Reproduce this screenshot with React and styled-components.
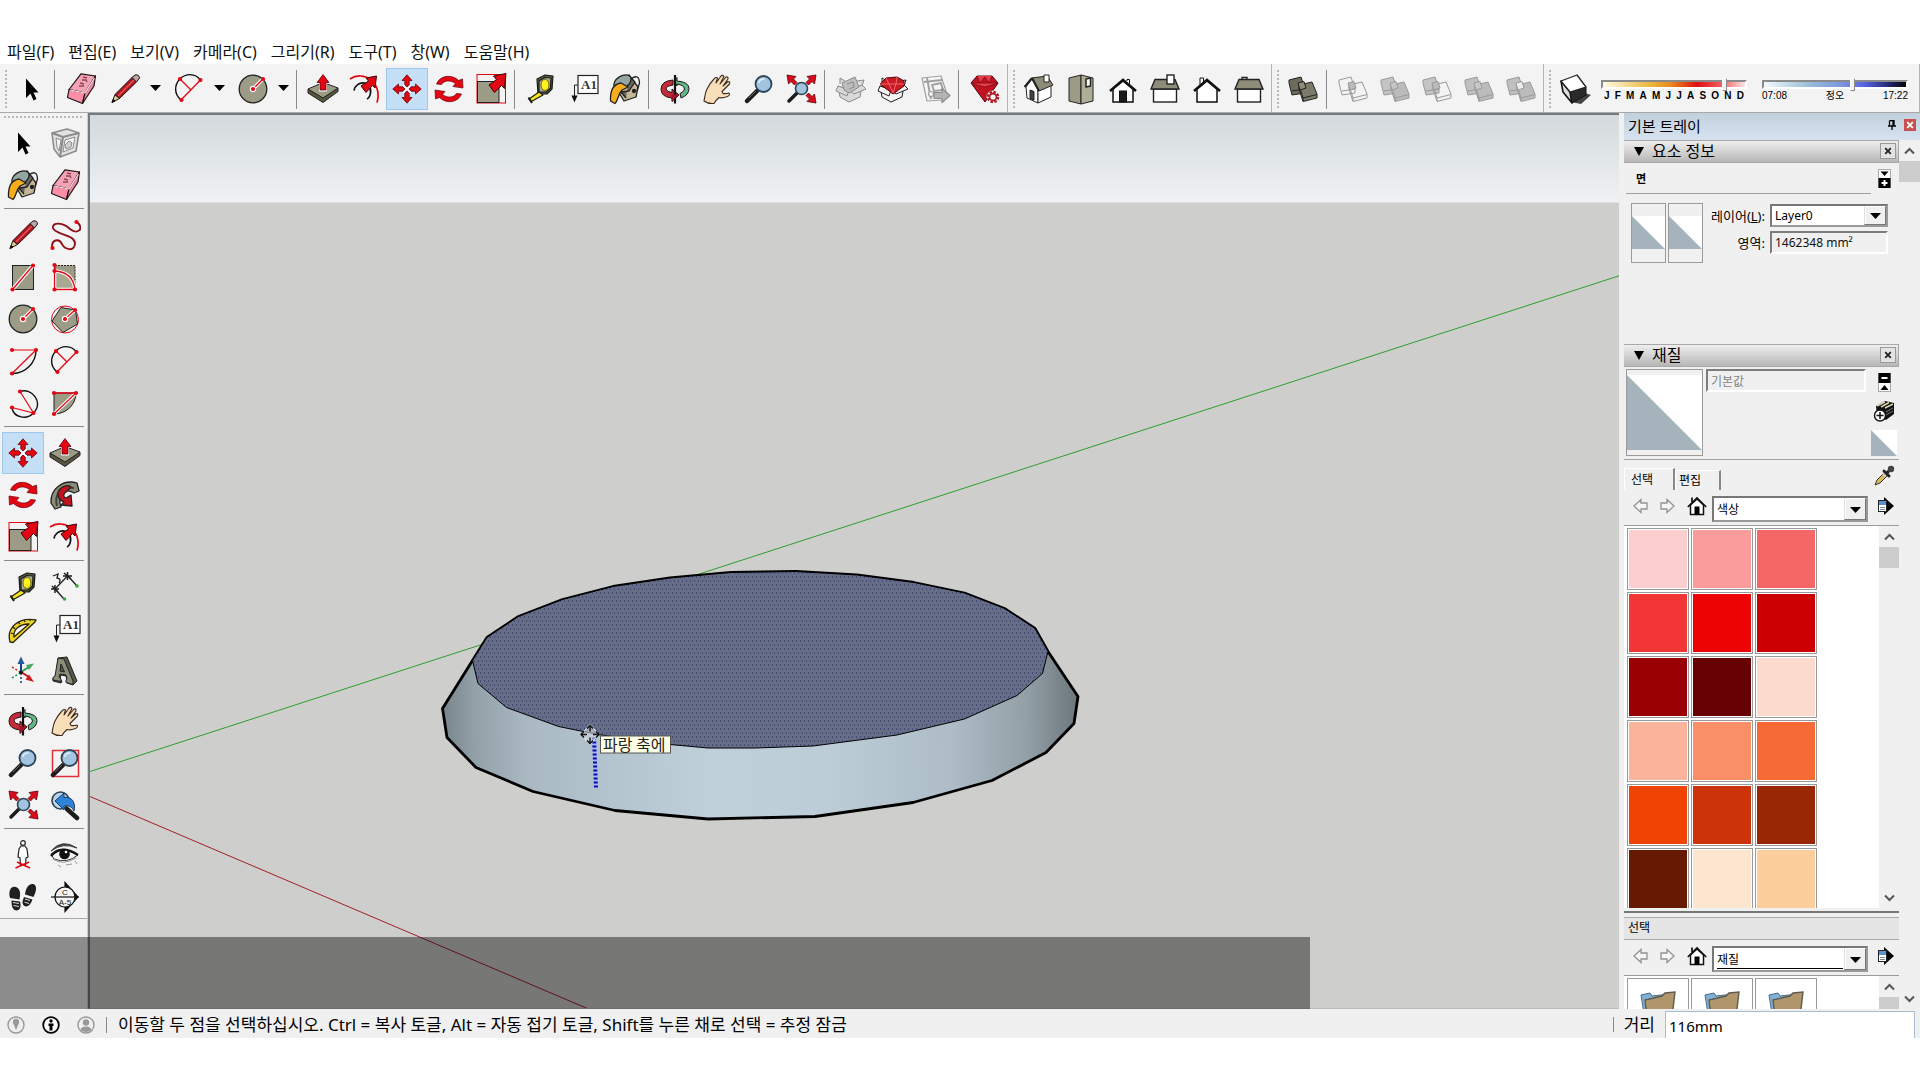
import styled, { createGlobalStyle } from 'styled-components';

const GlobalStyle = createGlobalStyle`
  * {
    box-sizing: border-box;
  }
  body {
    margin: 0;
    background: #fff;
    color: #000;
    font-family: 'Noto Sans', 'Noto Sans CJK KR', sans-serif;
    font-size: 12px;
  }
  button, input, select {
    font: inherit;
    color: inherit;
    border-radius: 0;
  }
`;

const RED = '#e30613';
const STONE = '#9c9b86';

/* ---------- icons, all drawn on a 32 x 32 grid ---------- */

const Dots = ({ at }) => at.map(([x, y]) => <circle key={`${x}-${y}`} cx={x} cy={y} r="2.1" fill={RED} />);

const BigArrow = () => (
  <path d="M31 .5 L18.5 3 L21.5 6.5 L14 12 L19.5 19.5 L26.5 12.5 L29.5 15.5Z" fill={RED} stroke="#3a0508" strokeWidth="1" />
);

const pencil = (
  <g stroke="#1c1010" strokeLinejoin="round">
    <path d="M3 29.5 L6 21.5 L10.5 25.5Z" fill="#d8cf8e" />
    <path d="M3 29.5 L4 26.5 L6 28Z" fill="#111" />
    <path d="M6 21.5 L23 4.5 L27.5 9 L10.5 25.5Z" fill="#b3151c" />
    <path d="M9 23 L25 7" stroke="#e8565a" strokeWidth="1.5" />
    <path d="M23 4.5 L26 2 Q30 1 30.5 5 L27.5 9Z" fill="#b9a9a4" />
  </g>
);

const eraser = (
  <g stroke="#241318" strokeWidth="1.2" strokeLinejoin="round">
    <path d="M16 .8 L30.5 3 L20 20 L4 16.5Z" fill="#f5a3b4" />
    <path d="M4 16.5 L20 20 L17.5 30.5 L2.5 24.5Z" fill="#fb8fa6" />
    <path d="M20 20 L30.5 3 L29 13 L17.5 30.5Z" fill="#e88aa0" />
    <path d="M5 17 L20 20 L29.5 5" stroke="#ffe6ec" fill="none" />
    <path d="M18 4 l4 1 M17 7 l4 0 l1 2 M15 10 l4 1 M14 13 l5 0" strokeWidth="1.5" fill="none" stroke="#8a4a5b" />
  </g>
);

const bucket = (
  <g stroke="#222" strokeWidth="1.3" strokeLinejoin="round">
    <path d="M11 6 L20 2 L29 14 L27 24 L15 28 L9 18Z" fill="#c3b797" />
    <path d="M20 3 L26 9 L20 18 L12 19 L17 25" fill="#6a675f" />
    <ellipse cx="13.5" cy="9" rx="9.5" ry="6" transform="rotate(-32 13.5 9)" fill="#93a6a4" />
    <path d="M22 6 Q30 0 30.5 10 L28 18" fill="none" />
    <path d="M12 10 C5 11 1 17 1.5 28 L6 30.5 C9 28 9 21 13 17 L19 14Z" fill="#f8ad1d" />
    <circle cx="25" cy="18" r="1.5" fill="#222" />
  </g>
);

const arc = (
  <g fill="none">
    <path d="M8 27 C1 21 1 12 7 6 C13 0 22 0 27.5 7" stroke="#111" strokeWidth="1.4" />
    <path d="M7 6 L18 17 M8 27 L27.5 7" stroke={RED} strokeWidth="1.3" />
    <Dots at={[[7, 6], [27.5, 7], [8.5, 27]]} />
  </g>
);

const circle = (
  <g>
    <circle cx="16" cy="16" r="13.8" fill={STONE} stroke="#222" strokeWidth="1.3" />
    <path d="M16 16 L26 6" stroke="#fff" strokeWidth="3.5" />
    <path d="M16 16 L26 6" stroke={RED} strokeWidth="1.3" />
    <circle cx="16" cy="16" r="3.2" fill="#fff" />
    <Dots at={[[16, 16], [26, 6]]} />
  </g>
);

const pushPull = (
  <g strokeLinejoin="round">
    <path d="M1 16 L16 24.5 L31 15 V18.5 L16 29.5 L1 20Z" fill="#54543f" stroke="#222" />
    <path d="M1 16 L16 9.5 L31 15 L16 25Z" fill={STONE} stroke="#222" />
    <path d="M16 1.5 L22 9.5 H19 V17.5 H13 V9.5 H10Z" fill={RED} stroke="#fff" strokeWidth="2" />
    <path d="M16 1.5 L22 9.5 H19 V17 H13 V9.5 H10Z" fill={RED} stroke="#5d0009" strokeWidth=".8" />
  </g>
);

const offset = (
  <g fill="none">
    <path d="M1 6 C14 -3 34 9 28 29.5" stroke={RED} strokeWidth="1.7" />
    <path d="M5 17.5 C7 7 23 7 21.5 20 C21 24 20 25 18 26" stroke="#111" strokeWidth="1.7" />
    <path d="M27.5 3 L17 5 L19.5 8 L12 13 L17 19.5 L23.5 12.5 L26 15Z" fill={RED} stroke="#3a0508" />
  </g>
);

const move = (
  <g fill={RED} stroke="#6b0309" strokeWidth=".8">
    {[0, 90, 180, 270].map((a) => (
      <path key={a} transform={`rotate(${a} 16 16)`} d="M16 1.8 L21 7.5 H18.2 V12 L16 14 L13.8 12 V7.5 H11Z" />
    ))}
    <path d="M12 12 L20 20 M20 12 L12 20" stroke="#fff" strokeWidth="1.5" />
  </g>
);

const rotate = (
  <g fill={RED} stroke="#6b0309" strokeWidth=".7">
    {[0, 180].map((a) => (
      <path key={a} transform={`rotate(${a} 16 16)`} d="M3.5 11 C7 2 19 1 25.5 7.5 L29.5 6 L30 15 L20 13.5 L22.5 10.5 C17 6.5 11 7.5 8.5 11.5Z" />
    ))}
  </g>
);

const scale = (
  <g>
    <rect x="2" y="1.5" width="28.5" height="28.5" fill="none" stroke={RED} />
    <rect x="2.5" y="8.5" width="21.5" height="21" fill={STONE} stroke="#222" />
    <BigArrow />
  </g>
);

const tape = (
  <g stroke="#1c1c12" strokeWidth="1.2" strokeLinejoin="round">
    <path d="M12 6 L20 2 L28 3 L27 16 L22 21 L13 21Z" fill="#55564c" />
    <path d="M14 8 L20 4.5 L26 5 L25.5 15 L21 19 L14 19Z" fill="#a8a89c" />
    <ellipse cx="20" cy="12" rx="4" ry="5.5" fill="#fff21a" stroke="#77751a" />
    <path d="M14 19 L4 26 L6.5 28.5 L18 22Z" fill="#f6e51e" />
    <path d="M3.5 24.5 L7 30" strokeWidth="2" />
  </g>
);

const textLabel = (
  <g>
    <rect x="11" y="2.5" width="20" height="18" fill="#fff" stroke="#222" strokeWidth="1.2" />
    <text x="14" y="16" fontFamily="Liberation Serif" fontSize="13" fontWeight="700" fill="#333">A1</text>
    <path d="M11 12 H7.5 V23" fill="none" stroke="#222" />
    <path d="M4.5 22.5 H10.5 L7.5 29.5Z" fill="#111" />
  </g>
);

const orbit = (
  <g stroke="#241414" strokeLinejoin="round">
    <path d="M14 7 L14 12 Q7 13 7 16 Q8 19 13 19.5 L13 16 L20 22 L13 28.5 V25 Q2 24 2 16 Q2 8 14 7Z" fill="#c22b3a" />
    <path d="M18 8 V4.5 L15 8 L18 13 V11 Q25 12 25.5 16 Q25 19 21 20.5 L22 25 Q30 22 30 15.5 Q30 9 18 8Z" fill="#5fb887" />
    <path d="M16 2 V30.5" stroke="#111" strokeWidth="2.2" />
    <path d="M12 21 L20 22 L13 28Z" fill="#a3142a" stroke="none" />
  </g>
);

const hand = (
  <path
    d="M3 28 C4 23 4 20 6 16 C8 12 10 9 13 6 Q15 3.5 16.5 5 L15 10 L20 3 Q22 1.5 23 3.5 L19 11 L25 4 Q27.5 3.5 27 6 L22 13 L27 8.5 Q29.5 8.5 28.5 11 L21 18.5 L22 20.5 Q25 21 28 20 Q29.5 22 26.5 23.5 Q21 25.5 18 24.5 Q14 28 13 30.5 Q7 31 3 28Z"
    fill="#f8dfba"
    stroke="#3d2a1c"
    strokeWidth="1.1"
    strokeLinejoin="round"
  />
);

const lens = (
  <g>
    <path d="M4 28 L14 18" stroke="#1c1c1c" strokeWidth="4.5" strokeLinecap="round" />
    <path d="M6 25 L13 18" stroke="#666" strokeWidth="1" />
    <circle cx="20.5" cy="11" r="8" fill="#a3c4e0" stroke="#2d4457" strokeWidth="1.8" />
    <path d="M15.5 10 Q17 5.5 21.5 6" stroke="#e4f0fa" strokeWidth="1.5" fill="none" />
  </g>
);

const corner = 'M0 0 L9 1.5 L6.5 4 L10 7.5 L7.5 10 L4 6.5 L1.5 9Z';

const extents = (
  <g>
    <path d="M4 28 L12 20" stroke="#1c1c1c" strokeWidth="3.5" strokeLinecap="round" />
    <circle cx="16.5" cy="15.5" r="6" fill="#a3c4e0" stroke="#2d4457" strokeWidth="1.6" />
    <g fill="#d80c1c" stroke="#5d0009" strokeWidth=".8">
      <path d={corner} transform="translate(2 2)" />
      <path d={corner} transform="translate(31 2) scale(-1 1)" />
      <path d={corner} transform="translate(31 30) scale(-1 -1)" />
    </g>
  </g>
);

const openBox = (gem) => (
  <g stroke={gem ? '#222' : '#8b8b8b'} strokeLinejoin="round" fill={gem ? '#f4f4f4' : '#d9d9d9'}>
    <path d="M3 13 L14 17 L27 12 L25 24 L14 29 L5 24Z" />
    <path d="M3 13 L1 18 L12 23 L14 17Z M27 12 L31 16 L19 21 L14 17Z M5 11 L5 5 L10 8 M22 8 L29 7 L27 13" />
    {gem ? (
      <g fill="#c81925" stroke="#5d0009">
        <path d="M3 11 L9 5 L20 4 L27 8 L27 13 L16 21Z" />
        <path d="M3 11 L27 11 M9 5 L12 11 L16 20 L19 11 L20 4" stroke="#f0666e" fill="none" />
      </g>
    ) : (
      <path d="M7 10 L20 4 L24 14 L14 20 L9 17Z M12 11 L18 9 L19 14 L14 16" fill="#bdbdbd" />
    )}
  </g>
);

const layoutPage = (
  <g stroke="#a0a0a0" fill="#f6f6f6" strokeWidth="1.2" strokeLinejoin="round">
    <path d="M3 5 L22 3 L27 18 L24 27 L8 28Z" />
    <path d="M5 9 L23 7 M8 5 L12 26 M13 12 L22 10 L24 17 L15 18Z" strokeWidth="2" />
    <circle cx="12" cy="21" r="2.5" />
    <path d="M15 19.5 H23 V15.5 L31 22.5 L23 29.5 V25.5 H15Z" fill="#b4b4b4" stroke="#8c8c8c" />
  </g>
);

const gem = (
  <g strokeLinejoin="round">
    <path d="M2 10 L8 3 H23 L29 10 L16 29Z" fill="#c0121f" stroke="#5d0009" />
    <path d="M2 10 H29 L23 12 L16 14 L8 12Z M8 3 L11 10 L16 4 L20 10 L23 3" fill="#e43d47" stroke="#7b0a14" strokeWidth=".8" />
    <circle cx="24" cy="24" r="4.5" fill="#f3f3f3" stroke="#f3f3f3" strokeWidth="4" />
    <circle cx="24" cy="24" r="5" fill="none" stroke="#b31b27" strokeWidth="2.5" strokeDasharray="2.4 1.5" />
    <circle cx="24" cy="24" r="3.5" fill="#f3f3f3" stroke="#b31b27" strokeWidth="1.8" />
  </g>
);

const houseIso = (
  <g stroke="#222" strokeLinejoin="round">
    <path d="M3 14 L9 6 L15 17 V30 L4 25Z" fill="#fff" />
    <path d="M15 17 L28 12 V24 L15 30Z" fill="#fff" />
    <path d="M9 5 L24 3 L30 12 L16 18Z" fill="#8d8c79" />
    <path d="M9 5 L1.5 14 M9 5 L16 18" strokeWidth="2" />
    <path d="M21 2 H26 V9 H21Z" fill="#fff" />
    <path d="M7 17 L11 18.5 V27 L7 25.5Z" fill="#444" />
  </g>
);

const houseTop = (
  <g stroke="#222" strokeLinejoin="round">
    <path d="M4 5 L16 2 V31 L4 28Z" fill="#9c9b86" />
    <path d="M16 2 L28 5 V28 L16 31Z" fill="#aead98" />
    <path d="M21 6 L25.5 5 V13 L21 14Z" fill="#fff" strokeWidth="1.5" />
  </g>
);

const houseFront = (
  <g stroke="#111" strokeLinejoin="miter">
    <path d="M6 16 V29 H26 V16 L16 8Z" fill="#fff" strokeWidth="1.5" />
    <path d="M3 18 L16 7 L29 18" fill="none" strokeWidth="2.6" />
    <path d="M20 8 V6.5 H22.5 V11" fill="#fff" />
    <rect x="12.5" y="18" width="7" height="11" fill="#1c1c1c" />
  </g>
);

const houseRight = (
  <g stroke="#222" strokeWidth="1.4">
    <rect x="4.5" y="16" width="23" height="13" fill="#fff" />
    <path d="M6 6.5 H26 L30 16 H2Z" fill="#8d8c79" />
    <rect x="18" y="2" width="7" height="9" fill="#fff" />
  </g>
);

const houseBack = (
  <g stroke="#111">
    <path d="M6 16 V29 H26 V16 L16 8Z" fill="#fff" strokeWidth="1.5" />
    <path d="M9 12 V5 H12.5 V10" fill="#fff" />
    <path d="M3 18 L16 7 L29 18" fill="none" strokeWidth="2.6" />
  </g>
);

const houseLeft = (
  <g stroke="#222" strokeWidth="1.4">
    <rect x="4.5" y="16" width="23" height="13" fill="#fff" />
    <path d="M9 6.5 V4.5 H14 V6.5" fill="#fff" />
    <path d="M6 6.5 H26 L30 16 H2Z" fill="#8d8c79" />
  </g>
);

const solid = (stroke, back, front, inner) => (
  <g stroke={stroke} strokeLinejoin="round">
    <path d="M2 7 L14 4 L18 16 V20 L5 22 L2 10Z" fill={back} />
    <path d="M5 18 L18 16" />
    <path d="M12 12 L25 9 L30 21 V25 L16 28.5 L12 16Z" fill={front} />
    <path d="M16 25 L30 21.5 M12 12 L16 25 V28" fill="none" />
    <path d="M11 10 L17 8.5 L19 15 L13 17Z" fill={inner} />
  </g>
);

const shadowCube = (
  <g strokeLinejoin="round">
    <path d="M12 29 L22 31 L32 22 L26 20Z" fill="#444" />
    <path d="M2 8 L11 19 L13 30 L4 19Z" fill="#ddd" stroke="#111" strokeWidth="1.6" />
    <path d="M11 19 L27 14 L27 22 L13 30Z" fill="#2a2a2a" stroke="#111" />
    <path d="M2 8 L18 2 L27 14 L11 19Z" fill="#fff" stroke="#222" strokeWidth="1.3" />
  </g>
);

const component = (
  <g stroke="#8b8b8b" fill="#e2e2e2" strokeLinejoin="round">
    <path d="M3 6 L18 2 L30 6 L27 24 L11 30 L5 22Z" strokeWidth="1.6" />
    <path d="M3 6 L14 10 L30 6 M14 10 L11 30" fill="none" strokeWidth="2" />
    <path d="M7 11 L12 13 L10 24 L8 20Z M16 13 L26 10 L24 21 L14 25Z" fill="#f5f5f5" />
    <path d="M16 18 L20 14 L23 16 L22 20 L17 22Z" fill="#cfcfcf" />
  </g>
);

const freehand = (
  <g fill="none">
    <path d="M28 3 C36 10 28 16 21 10 C14 3 3 3 4 9 C6 16 25 15 26 24 C26 34 15 30 13 25 C10 19 2 20 3 30" stroke="#8d1019" strokeWidth="1.9" />
    <Dots at={[[27.5, 3], [3.5, 29]]} />
  </g>
);

const rectangle = (
  <g>
    <rect x="5.5" y="4.5" width="21" height="24" fill={STONE} stroke="#222" />
    <path d="M5.5 28.5 L26 4.5" stroke="#fff" strokeWidth="3.5" />
    <path d="M5.5 28.5 L26 4.5" stroke={RED} strokeWidth="1.3" />
    <Dots at={[[5.5, 28.5], [26, 4.5]]} />
  </g>
);

const rotatedRect = (
  <g>
    <rect x="6" y="4.5" width="20" height="24" fill={STONE} stroke="#222" strokeDasharray="2 1" />
    <path d="M5.5 10 Q24 11 26 28.5 H5.5Z" fill="#a9a894" stroke="#fff" strokeWidth="3.5" />
    <path d="M5.5 4 V28.5 H26 Q24 11 5.5 10" fill="none" stroke={RED} strokeWidth="1.3" />
    <Dots at={[[5.5, 4], [5.5, 10], [5.5, 28.5], [26, 28.5]]} />
  </g>
);

const polygon = (
  <g>
    <circle cx="16" cy="16.5" r="13.5" fill="none" stroke={RED} />
    <path d="M3 18 L12 4.5 L26.5 7 L28.5 21 L14 29.5Z" fill={STONE} stroke="#222" />
    <path d="M16 16 L26 7" stroke="#fff" strokeWidth="3.5" />
    <path d="M16 16 L26 7" stroke={RED} strokeWidth="1.3" />
    <circle cx="16" cy="16" r="3.2" fill="#fff" />
    <Dots at={[[16, 16], [26, 7]]} />
  </g>
);

const arcCenter = (
  <g fill="none">
    <path d="M5 28.5 C18 29 29 18 29 5" stroke="#111" strokeWidth="1.4" />
    <path d="M5 5 H29 L5 28.5" stroke={RED} strokeWidth="1.2" />
    <Dots at={[[5, 5], [29, 5], [5, 28.5]]} />
  </g>
);

const arcThree = (
  <g fill="none">
    <path d="M13 4.5 C25 0 37 16 26.5 26 C20 33 7 31 5 21" stroke="#111" strokeWidth="1.4" />
    <path d="M13 4.5 L26.5 26 L5 20.5" stroke={RED} strokeWidth="1.2" />
    <Dots at={[[13, 4.5], [26.5, 26], [5, 20.5]]} />
  </g>
);

const pie = (
  <g fill="none">
    <path d="M5 27 V6 H27 C27 17 18 27 5 27Z" fill={STONE} stroke="#222" />
    <path d="M5 27 L27 6" stroke="#fff" strokeWidth="3.5" />
    <path d="M5 27 L27 6 H5" stroke={RED} strokeWidth="1.3" />
    <Dots at={[[5, 6], [27, 6], [5, 27]]} />
  </g>
);

const followMe = (
  <g stroke="#222" strokeWidth="1.3" strokeLinejoin="round">
    <path d="M2 24 C1 10 14 0 28 4 L30 12 L25 14 C15 8 8 16 12 28 L6 30Z" fill="#8d8c79" />
    <path d="M8 27 C5 15 12 7 25 9" fill="none" stroke="#44433a" strokeWidth="2" />
    <path d="M10 11 C14 6 20 6 22 8 L17 13 C14 15 14 18 17 19 L22 16 L23 27 L12 26 L15 23 C8 20 8 14 10 11Z" fill="#c3131f" />
  </g>
);

const dimension = (
  <g fill="none" stroke="#222" strokeWidth="1.3">
    <path d="M6 18 L19 4.5 M7 19 L15 28 M19 5 L28 15" />
    <path d="M2 18 H10 M6 14 V22 M3 15 L9 21 M14 5 H23 M18.5 1 V9 M15 2 L22 8" strokeWidth="1.5" />
    <path d="M4 5 L9 3 L8 7 Q13 8 10 12" />
    <circle cx="15.5" cy="28" r="1.8" fill="#3ba63b" stroke="none" />
    <circle cx="28" cy="15" r="1.8" fill="#3ba63b" stroke="none" />
  </g>
);

const protractor = (
  <g stroke="#2b2608" strokeWidth="1.3" strokeLinejoin="round">
    <path d="M3 29 C-1 14 12 4 29 7 L28 9 L6 29.5Z" fill="#ecd32c" />
    <path d="M7 24 C6 16 13 11 22 11Z" fill="#f3f3f3" />
    <path d="M4 20 l3 1 M6 14 l2 2 M11 9 l2 2 M17 7 l1 2 M23 6 l0 2" />
  </g>
);

const axes = (
  <g fill="none" strokeWidth="1.5">
    <path d="M14 18 V29" stroke="#1a3f7d" strokeDasharray="2 2" />
    <path d="M5 12 L13 17" stroke="#c22" strokeDasharray="2 2" />
    <path d="M5 23 L13 18" stroke="#2a9c4a" strokeDasharray="2 2" />
    <path d="M14 17 V8" stroke="#1a3f7d" strokeWidth="2" />
    <path d="M14 1.5 L17.5 9 H10.5Z" fill="#2456a3" />
    <path d="M14 17 L22 12" stroke="#2a9c4a" strokeWidth="2" />
    <path d="M27 8.5 L22 15 L19 10Z" fill="#45a85c" />
    <path d="M14 17 L22 22" stroke="#b3151c" strokeWidth="2" />
    <path d="M27 27 L18.5 24.5 L22 19.5Z" fill="#d01825" />
    <circle cx="14" cy="17.5" r="1.8" fill="#111" />
  </g>
);

const text3d = (
  <g stroke="#222" strokeLinejoin="round">
    <path d="M9 3 L18 2 L28 26 L24 30 L18 28 V25 L17 21 L12 20 L11 24 L13 26 L12 28 L4 26 L4 23 L7 21Z" fill="#55564c" />
    <path d="M9 3 L15 4 L24 26 L24 29.5 L17 27.5 V25 L18 24 L17 20 L11 19 L10 22 L12 24 V26.5 L4 25 V22.5 L6 21Z M12 9 L11 16 L15.5 17Z" fill="#8d8c79" />
  </g>
);

const zoomWindow = (
  <g>
    <rect x="3.5" y="3.5" width="26" height="26" fill="none" stroke="#e0303a" strokeWidth="1.5" />
    <g>{lens}</g>
  </g>
);

const zoomPrevious = (
  <g>
    <circle cx="11.5" cy="11.5" r="8.5" fill="#bcd4e8" stroke="#2d4457" strokeWidth="1.6" />
    <path d="M18 20 L28 29" stroke="#1c1c1c" strokeWidth="4.5" strokeLinecap="round" />
    <path d="M6 12 L15 4 V8.5 C23 7 27 14 25 22 C23 18 20 16 15 17 V21Z" fill="#2e82d8" stroke="#173c66" />
  </g>
);

const camera = (
  <g fill="none" stroke="#222" strokeWidth="1.2">
    <circle cx="16" cy="4" r="2.3" fill="#fff" />
    <path d="M14 7 L12 10 L11 18 L13 19 L13.5 26 H18.5 L19 19 L21 18 L20 10 L18 7Z" fill="#fff" />
    <path d="M8.5 29 L22 23 M10 23 L23 29" stroke={RED} strokeWidth="1.4" />
  </g>
);

const eye = (
  <g>
    <path d="M2 15 Q12 5 29 16 Q18 25 5 20Z" fill="#f2f2f2" stroke="#333" strokeWidth="1" />
    <path d="M2 12 Q13 -1 28 9 Q14 3 2 12Z" fill="#3a3a3a" stroke="#3a3a3a" />
    <path d="M2 17 Q12 5 29 16" fill="none" stroke="#111" strokeWidth="2.2" />
    <circle cx="15.5" cy="15" r="5.3" fill="#111" />
    <circle cx="17" cy="13" r="1.3" fill="#fff" />
    <path d="M4 20 Q14 27 27 19 M9 26 l3 2 M17 26 l6 -1 M26 22 l2 3" fill="none" stroke="#999" />
  </g>
);

const footprints = (
  <g fill="#1f1f1f">
    <path d="M3 17 C1 10 4 5 8.500 6 C13 7 14 12 12.5 18.5Z M4.500 19.5 L13 20.5 C14.500 26 13 29.5 9.500 29.5 C5.500 29 4.500 25 4.500 19.5Z" />
    <path d="M18 13.5 C19 6 22 2.500 26 3 C30 4 30 9 26.5 16Z M17 16 L25.500 18.5 C23.500 24 20.500 26.500 17.500 25 C14.500 23 15.500 20 17 16Z" />
    <path d="M6 21.5 L12 22.5 M6.500 24.5 L12 25.5 M18 18 L23 19.5 M17.500 21 L22 22.500" stroke="#ddd" />
  </g>
);

const section = (
  <g stroke="#111" strokeWidth="1.2">
    <path d="M16 1.5 L29 16 L16 30.5Z" fill="#111" />
    <circle cx="16" cy="16" r="10" fill="#f6f6f6" />
    <path d="M2 16 H30" />
    <g stroke="none" fill="#111" fontFamily="Liberation Sans" fontSize="8" textAnchor="middle">
      <text x="16" y="14">C</text>
      <text x="16" y="23.5">A-5</text>
    </g>
  </g>
);

const select = <path d="M11 5.5 V25 L15.5 20.5 L18.5 27.5 L21.5 26 L18.5 19.5 H23.5Z" fill="#000" />;

const ICONS = {
  select, eraser, pencil, arc, circle, pushPull, offset, move, rotate, scale, tape, textLabel, bucket,
  orbit, hand, lens, extents, layoutPage, gem, houseIso, houseTop, houseFront, houseRight, houseBack,
  houseLeft, shadowCube, component, freehand, rectangle, rotatedRect, polygon, arcCenter, arcThree, pie,
  followMe, dimension, protractor, axes, text3d, zoomWindow, zoomPrevious, camera, eye, footprints, section,
  boxEmpty: openBox(false),
  boxGem: openBox(true),
  outerShell: solid('#222', '#6d6c5c', '#7c7b69', '#8d8c79'),
  intersect: solid('#9a9a9a', 'none', 'none', '#bbb'),
  union: solid('#9a9a9a', '#c4c4c4', '#bbb', '#c4c4c4'),
  subtract: solid('#9a9a9a', '#c4c4c4', 'none', '#bbb'),
  trim: solid('#9a9a9a', '#c0c0c0', '#bbb', '#c9c9c9'),
  split: solid('#9a9a9a', '#c0c0c0', '#bbb', '#eee'),
};

const Icon = ({ name }) => (
  <svg width="32" height="32" viewBox="0 0 32 32" aria-hidden="true">{ICONS[name]}</svg>
);

/* ---------- frame and menu ---------- */

const AppFrame = styled.div`
  display: flex;
  flex-direction: column;
  height: 100vh;
  padding: 40px 0 42px;
  overflow: hidden;
`;

const MenuBar = styled.nav`
  display: flex;
  flex: none;
  align-items: center;
  gap: 14px;
  height: 24px;
  padding: 0 7px;
  font-size: 16px;
  line-height: 24px;
`;

const MenuLink = styled.a`
  color: #111;
  text-decoration: none;
  white-space: nowrap;
`;

/* ---------- toolbars ---------- */

const TopBar = styled.div`
  display: flex;
  flex: none;
  height: 49px;
  background: #f3f3f3;
  border-bottom: 1px solid #a9a9a9;
`;

const ToolGroup = styled.div`
  display: flex;
  align-items: center;
  padding: 2px 1px 0 4px;
  border-right: 1px solid #b5b5b5;
  &:last-child {
    flex: 1;
  }
`;

const Grip = styled.div`
  width: ${(p) => (p.$flat ? 'auto' : '3px')};
  height: ${(p) => (p.$flat ? '3px' : '41px')};
  margin: ${(p) => (p.$flat ? '0 3px 4px 3px' : '0 3px 0 0')};
  background: radial-gradient(circle, #b9b9b9 1px, transparent 1px) 0 0 / 4px 4px;
`;

const ToolButton = styled.button`
  display: flex;
  align-items: center;
  justify-content: center;
  width: 42px;
  height: 42px;
  padding: 0;
  background: ${(p) => (p.$active ? '#c4dff6' : 'none')};
  border: 1px solid ${(p) => (p.$active ? '#9cc8ee' : 'transparent')};
`;

const Split = styled.div`
  display: flex;
  align-items: center;
  width: 64px;
  padding-left: 2px;
`;

const CaretButton = styled.button`
  width: 18px;
  height: 42px;
  padding: 0 0 6px;
  background: none;
  border: 0;
`;

const Divider = styled.div`
  width: 8px;
  height: 39px;
  padding-left: 2px;
  &::before {
    content: '';
    display: block;
    width: 1px;
    height: 100%;
    background: #8a8a8a;
  }
`;

const SideDivider = styled.div`
  grid-column: 1 / -1;
  height: 8px;
  padding: 2px 2px 0;
  &::before {
    content: '';
    display: block;
    height: 1px;
    background: #8a8a8a;
  }
`;

const Workspace = styled.div`
  display: flex;
  flex: 1;
  min-height: 0;
  background: #f2f2f2;
`;

const SideBar = styled.div`
  flex: none;
  width: 88px;
  border-right: 1px solid #ccc;
`;

const SideTools = styled.div`
  padding-top: 2px;
  background: #f3f3f3;
  border-bottom: 1px solid #a9a9a9;
`;

const SideGrid = styled.div`
  display: grid;
  grid-template-columns: 42px 42px;
  padding: 0 2px;
`;

const Caret = ({ size = 11, tall }) => (
  <svg width={size} height={tall ? 9 : 6} viewBox="0 0 12 6" preserveAspectRatio="none" aria-hidden="true">
    <path d="M0 0 H12 L6 6Z" fill="#000" />
  </svg>
);

/* ---------- shadow sliders ---------- */

const SliderBox = styled.label`
  display: flex;
  flex-direction: column;
  width: 146px;
  margin-left: ${(p) => (p.$first ? '5px' : '15px')};
`;

const SliderTrack = styled.input`
  appearance: none;
  width: 100%;
  height: 13px;
  margin: 0;
  background: none;
  &::-webkit-slider-runnable-track {
    height: 9px;
    background: ${(p) => p.$ramp};
    border: 2px solid;
    border-color: #8a8a8a #fff #fff #8a8a8a;
  }
  &::-webkit-slider-thumb {
    appearance: none;
    width: 5px;
    height: 13px;
    margin-top: -4px;
    background: #f3f3f3;
    border: 1px solid;
    border-color: #fff #8a8a8a #8a8a8a #fff;
  }
`;

const SliderScale = styled.span`
  display: flex;
  justify-content: space-between;
  padding: 0 ${(p) => (p.$inset ? '3px' : '0')};
  font-family: 'Liberation Sans', 'Noto Sans CJK KR', sans-serif;
  font-size: 10px;
  font-weight: ${(p) => (p.$inset ? 700 : 400)};
  line-height: 10px;
`;

/* ---------- drawing area ---------- */

const Viewport = styled.main`
  position: relative;
  flex: 1;
  min-width: 0;
  border-top: 2px solid #74797c;
  border-left: 2px solid #74797c;
  border-bottom: 1px solid #bbb;
`;

const SceneSvg = styled.svg`
  display: block;
  width: 100%;
  height: 100%;
`;

const CaptionShade = styled.div`
  position: absolute;
  left: 0;
  bottom: 71px;
  width: 1310px;
  max-width: 70%;
  height: 72px;
  background: rgba(0, 0, 0, 0.42);
`;

const BODY = '442.5,708 447,737 476,767 533,791 615,810 708,818.5 815,816 913,802 992,780 1046,752 1074,723 1078,696 1048,651 1035,628 1004.5,608 964.5,592.5 914,582 857,574.5 796,571 731,572 670,577.5 613,586 562.5,599 518.5,616 487,637 472.5,660';
const TOP_FACE = '472.5,660 478,683 506.5,707 558.5,726 598,734 670,744 708,747.5 756,747.5 813,745.5 897,734.5 964.5,718.5 1017,695 1042.5,673 1048,651 1035,628 1004.5,608 964.5,592.5 914,582 857,574.5 796,571 731,572 670,577.5 613,586 562.5,599 518.5,616 487,637';

const Scene = () => (
  <SceneSvg viewBox="90 114 1529 894" preserveAspectRatio="xMidYMid slice" role="img" aria-label="모델">
    <defs>
      <linearGradient id="sky" x1="0" y1="0" x2="0" y2="1">
        <stop offset="0" stopColor="#d3d9dc" />
        <stop offset="1" stopColor="#eff2f4" />
      </linearGradient>
      <linearGradient id="side" gradientUnits="userSpaceOnUse" x1="442" y1="690" x2="1078" y2="680">
        <stop offset="0" stopColor="#78848a" />
        <stop offset=".05" stopColor="#92a0a8" />
        <stop offset=".13" stopColor="#a9b8c1" />
        <stop offset=".25" stopColor="#b3c3cd" />
        <stop offset=".42" stopColor="#bfd0da" />
        <stop offset=".6" stopColor="#bdcdd8" />
        <stop offset=".8" stopColor="#adbcc6" />
        <stop offset=".92" stopColor="#929fa6" />
        <stop offset="1" stopColor="#6c767b" />
      </linearGradient>
      <pattern id="stipple" width="4" height="8" patternUnits="userSpaceOnUse">
        <rect width="4" height="8" fill="#666d86" />
        <rect width="1" height="1" fill="#22265f" />
        <rect x="2" y="4" width="1" height="1" fill="#22265f" />
      </pattern>
    </defs>
    <rect x="0" y="0" width="1920" height="1080" fill="#cececc" />
    <rect x="0" y="114" width="1920" height="88" fill="url(#sky)" />
    <path d="M90 771 L1620 275" stroke="#2f9e2f" />
    <path d="M90 796 L592 1010" stroke="#a3202a" />
    <polygon points={BODY} fill="url(#side)" stroke="#000" strokeWidth="2.8" strokeLinejoin="round" />
    <polygon points={TOP_FACE} fill="url(#stipple)" stroke="#000" strokeWidth="1" />
    <path d="M594 737 L596 788" stroke="#a9b6ff" strokeWidth="4" />
    <path d="M594 737 L596 788" stroke="#0a0aa8" strokeWidth="4" strokeDasharray="2 2" />
    <g stroke="#111" strokeWidth="1.4" fill="none">
      <path d="M590 724 L599 734 L590 744 L581 734Z" fill="#cfd6da" fillOpacity=".6" stroke="#eee" strokeWidth="1" />
      <path d="M590 725 V731 M590 737 V743 M581 734 H587 M593 734 H599" />
      <path d="M587 728 L590 725 L593 728 M587 740 L590 743 L593 740 M584 731 L581 734 L584 737 M596 731 L599 734 L596 737" />
    </g>
    <rect x="600.5" y="735.5" width="70" height="17" fill="#ffffe6" stroke="#555" />
    <text x="603" y="750" fontFamily="'Noto Sans CJK KR', sans-serif" fontSize="16" fill="#222">파랑 축에</text>
  </SceneSvg>
);

/* ---------- tray ---------- */

const Tray = styled.aside`
  display: flex;
  flex: none;
  flex-direction: column;
  width: 301px;
  padding-left: 5px;
  background: #f0f0f0;
`;

const TrayTitle = styled.div`
  display: flex;
  flex: none;
  align-items: center;
  gap: 8px;
  height: 27px;
  padding: 0 4px 3px;
  background: linear-gradient(#c2d0de, #d6e2ef);
  font-size: 15px;
`;

const TrayName = styled.span`
  flex: 1;
`;

const PlainButton = styled.button`
  display: flex;
  align-items: center;
  justify-content: center;
  padding: 0;
  background: none;
  border: 0;
`;

const TrayClose = styled(PlainButton)`
  width: 12px;
  height: 12px;
  background: #c75050;
`;

const TrayBody = styled.div`
  display: flex;
  flex: 1;
  min-height: 0;
`;

const TrayColumn = styled.div`
  display: flex;
  flex: 1;
  flex-direction: column;
  min-width: 0;
`;

const PanelHead = styled.div`
  display: flex;
  flex: none;
  align-items: center;
  height: 23px;
  padding: 0 2px 1px 10px;
  gap: 8px;
  background: linear-gradient(#eee, #b7b7b7);
  border: solid #a8a8a8;
  border-width: 1px 1px 1px 0;
`;

const PanelName = styled.h2`
  flex: 1;
  margin: 0;
  font-size: 16px;
  font-weight: 400;
  line-height: 20px;
`;

const PanelClose = styled(PlainButton)`
  width: 16px;
  height: 16px;
  background: #e3e3e3;
  border: 1px solid #999;
`;

const EntityPanel = styled.div`
  flex: none;
  height: 181px;
  padding: 5px 8px 0 2px;
`;

const EntityTitle = styled.div`
  display: flex;
  align-items: center;
  justify-content: space-between;
  height: 20px;
  padding-left: 10px;
  font-size: 11px;
  font-weight: 700;
`;

const Rule = styled.hr`
  flex: none;
  height: 1px;
  margin: ${(p) => (p.$inset ? '5px 20px 9px 0' : '0')};
  background: #a0a0a0;
  border: 0;
`;

const EntityRow = styled.div`
  display: flex;
  gap: 2px;
  padding-left: 5px;
`;

const Thumb = styled.div`
  width: ${(p) => p.$w}px;
  height: ${(p) => p.$h}px;
  padding-top: ${(p) => p.$top}px;
  border: 1px solid #9a9a9a;
  svg {
    display: block;
  }
`;

const FieldGrid = styled.div`
  display: grid;
  flex: 1;
  grid-template-columns: 1fr 118px;
  grid-auto-rows: 23px;
  gap: 4px 5px;
  align-items: center;
  justify-items: end;
  padding: 1px 3px 0 0;
  white-space: nowrap;
`;

const FieldLabel = styled.label`
  font-size: 13px;
`;

const SelectBox = styled.div`
  position: relative;
  flex: ${(p) => (p.$grow ? 1 : 'none')};
  width: 100%;
  height: ${(p) => (p.$grow ? 26 : 23)}px;
  margin: ${(p) => (p.$grow ? '6px 5px 0 0' : '0')};
  svg {
    position: absolute;
    right: 7px;
    top: ${(p) => (p.$grow ? 11 : 9)}px;
    pointer-events: none;
  }
  &::before {
    content: '';
    display: ${(p) => (p.$marked ? 'block' : 'none')};
    position: absolute;
    left: 5px;
    right: 25px;
    bottom: 3px;
    height: 1px;
    background: #000;
  }
  &::after {
    content: '';
    position: absolute;
    right: 2px;
    top: 2px;
    bottom: 2px;
    width: 20px;
    border: 1px solid;
    border-color: #fff #777 #777 #ddd;
    pointer-events: none;
  }
`;

const SelectField = styled.select`
  appearance: none;
  width: 100%;
  height: 100%;
  padding: 0 24px 0 3px;
  background: linear-gradient(#f0f0f0, #f0f0f0) right / 20px 100% no-repeat #fff;
  border: 2px solid;
  border-color: #777 #999 #999 #777;
`;

const TextField = styled.input`
  width: ${(p) => p.$w};
  height: 23px;
  padding: 0 3px;
  background: #f0f0f0;
  border: 2px solid;
  border-color: #7d7d7d #fff #fff #7d7d7d;
  color: ${(p) => (p.disabled ? '#838383' : '#111')};
`;

const MaterialTop = styled.div`
  display: flex;
  flex: none;
  gap: 3px;
  height: 92px;
  padding: 2px 2px 0;
`;

const MaterialActions = styled.div`
  display: flex;
  flex-direction: column;
  align-items: center;
  gap: 8px;
  margin-left: auto;
  padding-top: 4px;
`;

const TabRow = styled.div`
  display: flex;
  flex: none;
  align-items: flex-end;
  height: 30px;
`;

const Tab = styled.button`
  width: ${(p) => (p.$active ? 51 : 46)}px;
  height: ${(p) => (p.$active ? 22 : 20)}px;
  padding: 0 12px 0 ${(p) => (p.$active ? 6 : 3)}px;
  background: #f0f0f0;
  border: solid;
  border-width: 1px 2px 0 1px;
  border-color: #fff #888 #fff #fff;
  line-height: 16px;
  text-align: left;
  white-space: nowrap;
`;

const Picker = styled(PlainButton)`
  align-self: flex-start;
  margin: 5px 4px 0 auto;
`;

const NavRow = styled.div`
  display: flex;
  flex: none;
  align-items: center;
  height: 35px;
  padding: 0 5px 3px 9px;
  gap: 5px;
`;

const HistoryButtons = styled.div`
  display: flex;
  align-items: center;
  gap: 12px;
`;

const ListArea = styled.div`
  display: flex;
  flex: ${(p) => (p.$fixed ? 'none' : 1)};
  height: ${(p) => (p.$fixed ? '34px' : 'auto')};
  min-height: 0;
  background: #fff;
  border-top: 1px solid #9a9a9a;
  overflow: hidden;
`;

const TileGrid = styled.div`
  display: grid;
  flex: 1;
  grid-template-columns: repeat(3, 62px);
  grid-auto-rows: 62px;
  gap: 2px;
  align-content: start;
  padding: 2px 3px 0;
`;

const Swatch = styled.button`
  padding: 1px;
  background: ${(p) => p.$color} content-box;
  border: 1px solid #999;
`;

const FolderTile = styled.button`
  display: flex;
  justify-content: center;
  padding: 11px 0 0;
  background: #fff;
  border: 1px solid #999;
`;

const ScrollBar = styled.div`
  display: flex;
  flex: none;
  flex-direction: column;
  align-items: center;
  width: ${(p) => p.$w}px;
  background: #f0f0f0;
`;

const ScrollButton = styled(PlainButton)`
  flex: none;
  width: 100%;
  height: 21px;
`;

const ScrollThumb = styled.div`
  flex: none;
  width: 100%;
  height: 21px;
  margin-bottom: auto;
  background: #cdcdcd;
`;

const SecondaryHead = styled.div`
  flex: none;
  height: 29px;
  margin-top: 3px;
  padding-top: 4px;
  border-top: 2px solid #777;
`;

const SecondaryName = styled.h3`
  height: 23px;
  margin: 0;
  padding-left: 4px;
  background: #e5e5e5;
  border: solid #aaa;
  border-width: 1px 0;
  font-size: 12px;
  font-weight: 400;
  line-height: 20px;
`;

const Chevron = ({ down }) => (
  <svg width="11" height="8" viewBox="0 0 11 8" aria-hidden="true">
    <path d={down ? 'M1 1.5 L5.5 6 L10 1.5' : 'M1 6.5 L5.5 2 L10 6.5'} fill="none" stroke="#555" strokeWidth="2" />
  </svg>
);

const Cross = ({ color }) => (
  <svg width="8" height="8" viewBox="0 0 8 8" aria-hidden="true">
    <path d="M1.2 1.2 L6.8 6.8 M6.8 1.2 L1.2 6.8" stroke={color} strokeWidth="1.8" />
  </svg>
);

const Wedge = ({ w, h }) => (
  <svg width={w} height={h} viewBox="0 0 10 10" preserveAspectRatio="none" aria-hidden="true">
    <rect width="10" height="10" fill="#fff" />
    <path d="M0 0 L10 10 H0Z" fill="#a5b3bc" />
  </svg>
);

const ExpandIcon = ({ minus }) => (
  <svg width="13" height="19" viewBox="0 0 13 19" aria-hidden="true">
    <rect x=".5" y=".5" width="12" height="18" fill="#fff" stroke="#aaa" />
    <rect x=".5" y={minus ? 0 : 9} width="12" height="10" fill="#000" />
    <path d={minus ? 'M3.5 5 H9.5' : 'M3.5 14 H9.5 M6.5 11 V17'} stroke="#fff" strokeWidth="2" />
    <path d={minus ? 'M6.5 12 L10.5 17 H2.5Z' : 'M2.5 2.5 H10.5 L6.5 7Z'} fill="#000" />
  </svg>
);

const CreateIcon = () => (
  <svg width="22" height="22" viewBox="0 0 22 22" aria-hidden="true">
    <path d="M3 6 L12 1 L21 3 V14 L13 20 L4 16Z" fill="#111" />
    <path d="M4 6 L12 2 M8 7 L16 2.5 M12 8 L20 4" stroke="#d8d4b0" strokeWidth="1.5" />
    <path d="M13 12 L20 8 M13 15 L20 11" stroke="#777" />
    <circle cx="7" cy="15.5" r="5.5" fill="#fff" stroke="#111" strokeWidth="1.4" />
    <path d="M3.5 15.5 H10.5 M7 12 V19" stroke="#111" strokeWidth="1.5" />
  </svg>
);

const Dropper = () => (
  <svg width="21" height="21" viewBox="0 0 21 21" aria-hidden="true">
    <path d="M1 20 L3 15 L11 7 L14 10 L6 18Z" fill="#d9b95c" stroke="#333" />
    <path d="M8 9 L11 7 L14 10 L11 12Z" fill="#ccc" />
    <path d="M10 6 L15 11 M13 8 L17 3.5" stroke="#222" strokeWidth="3" strokeLinecap="round" />
    <circle cx="17" cy="4" r="3.2" fill="#444" />
  </svg>
);

const HistoryArrow = ({ flip }) => (
  <svg width="15" height="16" viewBox="0 0 15 16" aria-hidden="true">
    <path transform={flip ? 'translate(15 0) scale(-1 1)' : undefined} d="M1 8 L8 1.5 V5 H14 V11 H8 V14.5Z" fill="#f6f6f6" stroke="#929292" strokeWidth="1.3" />
  </svg>
);

const HomeIcon = () => (
  <svg width="20" height="20" viewBox="0 0 20 20" aria-hidden="true">
    <path d="M3.5 9 V18.5 H16.5 V9 L10 3Z" fill="#fff" stroke="#111" strokeWidth="1.5" />
    <path d="M.8 11 L10 2 L19.2 11 M5 6 V1.5" fill="none" stroke="#111" strokeWidth="1.7" />
    <rect x="7.5" y="10.5" width="5" height="8" fill="#000" />
  </svg>
);

const DetailsIcon = () => (
  <svg width="16" height="18" viewBox="0 0 16 18" aria-hidden="true">
    <path d="M6 0 L16 9 L6 18Z" fill="#000" />
    <rect x=".5" y="3.5" width="8" height="11" fill="#fff" stroke="#222" />
    <rect x="1" y="4" width="7" height="4" fill="#5c8fd0" />
    <path d="M2 10.5 H7 M2 12.5 H7" stroke="#789" />
  </svg>
);

const FolderIcon = () => (
  <svg width="36" height="40" viewBox="0 0 36 40" aria-hidden="true">
    <path d="M1 5 L10 3 L12 6 L30 4 L28 36 H6Z" fill="#7fb2d6" stroke="#4a6a80" />
    <path d="M5 10 L22 6 L25 3 L35 2 L31 36 H8Z" fill="#b1966b" stroke="#5e5a52" strokeWidth="1.4" />
  </svg>
);

/* ---------- status bar ---------- */

const StatusBar = styled.footer`
  display: flex;
  flex: none;
  align-items: center;
  height: 29px;
  padding: 2px 5px 0 7px;
  background: #f0f0f0;
  font-size: 17px;
  line-height: 24px;
`;

const StatusIcons = styled.div`
  display: flex;
  align-items: center;
  gap: 17px;
  height: 16px;
  padding-right: 11px;
  margin-right: 11px;
  border-right: 1px solid #888;
`;

const StatusText = styled.span`
  flex: 1;
  white-space: nowrap;
`;

const Measure = styled.label`
  display: flex;
  align-items: center;
  gap: 10px;
  padding-left: 10px;
`;

const MeasureTick = styled.span`
  width: 1px;
  height: 15px;
  background: #888;
`;

const MeasureInput = styled.input`
  width: 250px;
  height: 27px;
  padding: 2px 3px 0;
  background: #fff;
  border: 1px solid #a9bccf;
  border-bottom: 0;
  font-size: 15px;
`;

const MENU = ['파일(F)', '편집(E)', '보기(V)', '카메라(C)', '그리기(R)', '도구(T)', '창(W)', '도움말(H)'];

const TOP_TOOLS = [
  ['select', '|', 'eraser', 'pencil+', 'arc+', 'circle+', '|', 'pushPull', 'offset', 'move', 'rotate', 'scale', '|',
    'tape', 'textLabel', 'bucket', '|', 'orbit', 'hand', 'lens', 'extents', '|', 'boxEmpty', 'boxGem', 'layoutPage', '|', 'gem'],
  ['houseIso', 'houseTop', 'houseFront', 'houseRight', 'houseBack', 'houseLeft'],
  ['outerShell', '|', 'intersect', 'union', 'subtract', 'trim', 'split'],
];

const SIDE_TOOLS = [
  'select', 'component', 'bucket', 'eraser', '|',
  'pencil', 'freehand', 'rectangle', 'rotatedRect', 'circle', 'polygon', 'arcCenter', 'arc', 'arcThree', 'pie', '|',
  'move', 'pushPull', 'rotate', 'followMe', 'scale', 'offset', '|',
  'tape', 'dimension', 'protractor', 'textLabel', 'axes', 'text3d', '|',
  'orbit', 'hand', 'lens', 'zoomWindow', 'extents', 'zoomPrevious', '|',
  'camera', 'eye', 'footprints', 'section',
];

const COLORS = [
  '#fbcfcf', '#fa9c9c', '#f56666', '#f23535', '#ed0303', '#cc0003',
  '#990003', '#660003', '#fcdacd', '#f9b49b', '#f98f67', '#f56a35',
  '#f04405', '#cd3308', '#992706', '#661a04', '#fde6cf', '#fbce9b',
];

const MONTHS = 'JFMAMJJASOND'.split('');

const Tool = ({ name }) => (
  <ToolButton type="button" aria-label={name} $active={name === 'move'}><Icon name={name} /></ToolButton>
);

const MaterialNav = ({ value, marked }) => (
  <NavRow>
    <HistoryButtons>
      <PlainButton type="button" aria-label="뒤로"><HistoryArrow /></PlainButton>
      <PlainButton type="button" aria-label="앞으로"><HistoryArrow flip /></PlainButton>
      <PlainButton type="button" aria-label="홈"><HomeIcon /></PlainButton>
    </HistoryButtons>
    <SelectBox $grow $marked={marked}>
      <SelectField aria-label="라이브러리" defaultValue={value}>
        <option>{value}</option>
      </SelectField>
      <Caret size={11} />
    </SelectBox>
    <PlainButton type="button" aria-label="세부 정보"><DetailsIcon /></PlainButton>
  </NavRow>
);

function App() {
  return (
    <>
      <GlobalStyle />
      <AppFrame>
        <MenuBar>
          {MENU.map((m) => <MenuLink key={m} href="#">{m}</MenuLink>)}
        </MenuBar>

        <TopBar>
          {TOP_TOOLS.map((group, g) => (
            <ToolGroup key={g}>
              <Grip />
              {group.map((t, i) => {
                if (t === '|') return <Divider key={i} />;
                if (t.endsWith('+')) {
                  return (
                    <Split key={i}>
                      <Tool name={t.slice(0, -1)} />
                      <CaretButton type="button" aria-label="더 보기"><Caret /></CaretButton>
                    </Split>
                  );
                }
                return <Tool key={i} name={t} />;
              })}
            </ToolGroup>
          ))}
          <ToolGroup>
            <Grip />
            <Tool name="shadowCube" />
            <SliderBox $first>
              <SliderTrack type="range" aria-label="날짜" defaultValue="87" $ramp="linear-gradient(90deg, #fffbe8, #eab93a 33%, #e8881e 48%, #e01010 66%, #f06060 84%, #ffe4e4)" />
              <SliderScale $inset>{MONTHS.map((m, i) => <span key={i}>{m}</span>)}</SliderScale>
            </SliderBox>
            <SliderBox>
              <SliderTrack type="range" aria-label="시간" defaultValue="63" $ramp="linear-gradient(90deg, #f4fbff, #9cc0d8 30%, #7d94e0 55%, #5560dc 72%, #22266e 88%, #05050c)" />
              <SliderScale><span>07:08</span><span>정오</span><span>17:22</span></SliderScale>
            </SliderBox>
          </ToolGroup>
        </TopBar>

        <Workspace>
          <SideBar>
            <SideTools>
              <Grip $flat />
              <SideGrid>
                {SIDE_TOOLS.map((t, i) => (t === '|' ? <SideDivider key={i} /> : <Tool key={i} name={t} />))}
              </SideGrid>
            </SideTools>
          </SideBar>

          <Viewport>
            <Scene />
          </Viewport>

          <Tray>
            <TrayTitle>
              <TrayName>기본 트레이</TrayName>
              <PlainButton type="button" aria-label="고정">
                <svg width="8" height="10" viewBox="0 0 8 10"><path d="M1.5 .7 H6 V6 M1.5 .7 V6 M5 1 V6 M0 6 H8 M4 6 V10" fill="none" stroke="#000" strokeWidth="1.3" /></svg>
              </PlainButton>
              <TrayClose type="button" aria-label="닫기"><Cross color="#fff" /></TrayClose>
            </TrayTitle>
            <TrayBody>
              <TrayColumn>
                <PanelHead>
                  <Caret size={10} tall />
                  <PanelName>요소 정보</PanelName>
                  <PanelClose type="button" aria-label="닫기"><Cross color="#222" /></PanelClose>
                </PanelHead>
                <EntityPanel>
                  <EntityTitle>
                    면
                    <PlainButton type="button" aria-label="펼치기"><ExpandIcon /></PlainButton>
                  </EntityTitle>
                  <Rule $inset />
                  <EntityRow>
                    <Thumb $w={35} $h={60} $top={12}><Wedge w={33} h={33} /></Thumb>
                    <Thumb $w={35} $h={60} $top={12}><Wedge w={33} h={33} /></Thumb>
                    <FieldGrid>
                      <FieldLabel htmlFor="layer">레이어(<u>L</u>):</FieldLabel>
                      <SelectBox>
                        <SelectField id="layer" defaultValue="Layer0"><option>Layer0</option></SelectField>
                        <Caret size={11} />
                      </SelectBox>
                      <FieldLabel htmlFor="area">영역:</FieldLabel>
                      <TextField id="area" readOnly $w="100%" defaultValue="1462348 mm²" />
                    </FieldGrid>
                  </EntityRow>
                </EntityPanel>

                <PanelHead>
                  <Caret size={10} tall />
                  <PanelName>재질</PanelName>
                  <PanelClose type="button" aria-label="닫기"><Cross color="#222" /></PanelClose>
                </PanelHead>
                <MaterialTop>
                  <Thumb $w={77} $h={87} $top={5}><Wedge w={75} h={75} /></Thumb>
                  <TextField disabled aria-label="재질 이름" $w="160px" defaultValue="기본값" />
                  <MaterialActions>
                    <PlainButton type="button" aria-label="접기"><ExpandIcon minus /></PlainButton>
                    <PlainButton type="button" aria-label="재질 만들기"><CreateIcon /></PlainButton>
                    <Wedge w={26} h={26} />
                  </MaterialActions>
                </MaterialTop>
                <Rule />
                <TabRow>
                  <Tab type="button" $active>선택</Tab>
                  <Tab type="button">편집</Tab>
                  <Picker type="button" aria-label="샘플 추출"><Dropper /></Picker>
                </TabRow>
                <MaterialNav value="색상" />
                <ListArea>
                  <TileGrid>
                    {COLORS.map((c) => <Swatch key={c} type="button" aria-label={c} $color={c} />)}
                  </TileGrid>
                  <ScrollBar $w={20}>
                    <ScrollButton type="button" aria-label="위로"><Chevron /></ScrollButton>
                    <ScrollThumb />
                    <ScrollButton type="button" aria-label="아래로"><Chevron down /></ScrollButton>
                  </ScrollBar>
                </ListArea>
                <SecondaryHead>
                  <SecondaryName>선택</SecondaryName>
                </SecondaryHead>
                <MaterialNav value="재질" marked />
                <ListArea $fixed>
                  <TileGrid>
                    {[0, 1, 2].map((n) => <FolderTile key={n} type="button" aria-label="폴더"><FolderIcon /></FolderTile>)}
                  </TileGrid>
                  <ScrollBar $w={20}>
                    <ScrollButton type="button" aria-label="위로"><Chevron /></ScrollButton>
                    <ScrollThumb />
                  </ScrollBar>
                </ListArea>
              </TrayColumn>
              <ScrollBar $w={21}>
                <ScrollButton type="button" aria-label="위로"><Chevron /></ScrollButton>
                <ScrollThumb />
                <ScrollButton type="button" aria-label="아래로"><Chevron down /></ScrollButton>
              </ScrollBar>
            </TrayBody>
          </Tray>
        </Workspace>

        <StatusBar>
          <StatusIcons>
            <svg width="18" height="18" viewBox="0 0 18 18"><circle cx="9" cy="9" r="8" fill="none" stroke="#999" strokeWidth="1.4" /><path d="M9 14 L6 7 A3.2 3.2 0 1 1 12 7Z" fill="#999" /></svg>
            <svg width="18" height="18" viewBox="0 0 18 18"><circle cx="9" cy="9" r="7.8" fill="#fff" stroke="#000" strokeWidth="1.8" /><circle cx="9" cy="5" r="1.7" /><path d="M6.5 7.5 H11.5 V10 H10.5 V14.5 H7.5 V10 H6.5Z" /></svg>
            <svg width="18" height="18" viewBox="0 0 18 18"><circle cx="9" cy="9" r="8" fill="none" stroke="#999" strokeWidth="1.4" /><circle cx="9" cy="6.5" r="3.2" fill="#999" /><path d="M3.5 14 Q4 10.5 9 10.5 Q14 10.5 14.5 14 Q9 18 3.5 14Z" fill="#999" /></svg>
          </StatusIcons>
          <StatusText>이동할 두 점을 선택하십시오. Ctrl = 복사 토글, Alt = 자동 접기 토글, Shift를 누른 채로 선택 = 추정 잠금</StatusText>
          <MeasureTick />
          <Measure>
            거리
            <MeasureInput defaultValue="116mm" />
          </Measure>
        </StatusBar>
        <CaptionShade />
      </AppFrame>
    </>
  );
}

export default App;
